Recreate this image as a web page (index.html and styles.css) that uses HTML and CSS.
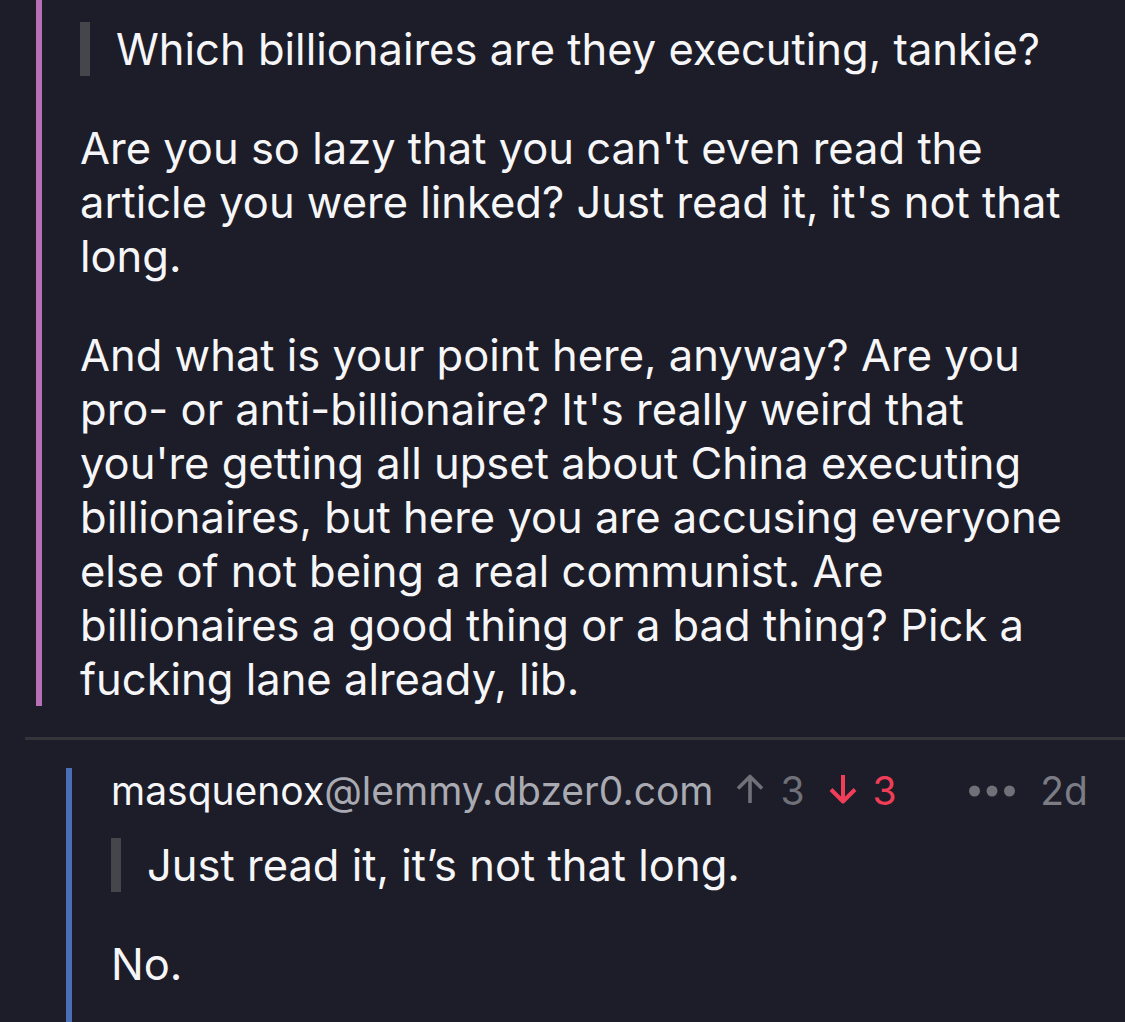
FILE: index.html
```html
<!DOCTYPE html>
<html lang="en">
<head>
    <meta charset="UTF-8">
    <meta name="viewport" content="width=device-width, initial-scale=1.0">
    <title>Comments</title>
    <link rel="stylesheet" href="styles.css">
</head>
<body>
    <div class="thread">
        <div class="comment parent">
            <blockquote class="quote">Which billionaires are they executing, tankie?</blockquote>
            <p>Are you so lazy that you can't even read the article you were linked? Just read it, it's not that long.</p>
            <p>And what is your point here, anyway? Are you pro- or anti-billionaire? It's really weird that you're getting all upset about China executing billionaires, but here you are accusing everyone else of not being a real communist. Are billionaires a good thing or a bad thing? Pick a fucking lane already, lib.</p>
        </div>

        <div class="divider"></div>

        <div class="comment reply">
            <div class="meta">
                <span class="user">masquenox<span class="instance">@lemmy.dbzer0.com</span></span>
                <span class="vote up">
                    <svg width="32" height="30" viewBox="0 0 32 30"><path d="M16 29V3M4 14.5L16 2.5 28 14.5" fill="none" stroke="currentColor" stroke-width="3.6" stroke-linejoin="round"/></svg>
                    3
                </span>
                <span class="vote down">
                    <svg width="32" height="30" viewBox="0 0 32 30"><path d="M16 1V27M4 15.5L16 27.5 28 15.5" fill="none" stroke="currentColor" stroke-width="4" stroke-linejoin="round"/></svg>
                    3
                </span>
                <span class="more">
                    <svg width="46" height="12" viewBox="0 0 46 12"><circle cx="5.5" cy="6" r="5.5"/><circle cx="23" cy="6" r="5.5"/><circle cx="40.5" cy="6" r="5.5"/></svg>
                </span>
                <span class="age">2d</span>
            </div>
            <blockquote class="quote">Just read it, it’s not that long.</blockquote>
            <p>No.</p>
        </div>
    </div>
</body>
</html>
```

FILE: styles.css
```css
body {
    margin: 0;
    background-color: #1c1d28;
    color: #f6f6f8;
    font-family: Inter, 'Noto Sans', sans-serif;
    font-size: 43.5px;
    line-height: 54px;
    height: 1022px;
    overflow: hidden;
}
p {
    margin: 45px 0 0;
}
.thread {
    padding-left: 25px;
}
.comment {
    border-left: 6px solid;
    padding-right: 37px;
}
.parent {
    margin-left: 11px;
    border-color: #b670b8;
    padding-top: 22px;
    padding-left: 38px;
}
.quote {
    margin: 0;
    border-left: 10px solid #45464c;
    padding-left: 26px;
}
.divider {
    height: 3px;
    margin-top: 31px;
    background-color: #33353b;
}
.reply {
    margin-left: 41px;
    margin-top: 28px;
    border-color: #4a6fb4;
    padding-left: 39px;
    height: 300px;
}
.meta {
    display: flex;
    align-items: center;
    font-size: 39px;
    line-height: 46px;
    margin-bottom: 24px;
    color: #6f7078;
}
.user {
    color: #f6f6f8;
}
.instance {
    color: #a9aab2;
}
.vote {
    display: flex;
    align-items: center;
    gap: 14px;
    margin-left: 21px;
}
.vote svg {
    margin-bottom: 4px;
}
.down {
    color: #f03e58;
    margin-left: 22px;
}
.more {
    display: flex;
    margin-left: auto;
    fill: #6f7078;
}
.age {
    margin-left: 25px;
    color: #7b7c84;
}
```
